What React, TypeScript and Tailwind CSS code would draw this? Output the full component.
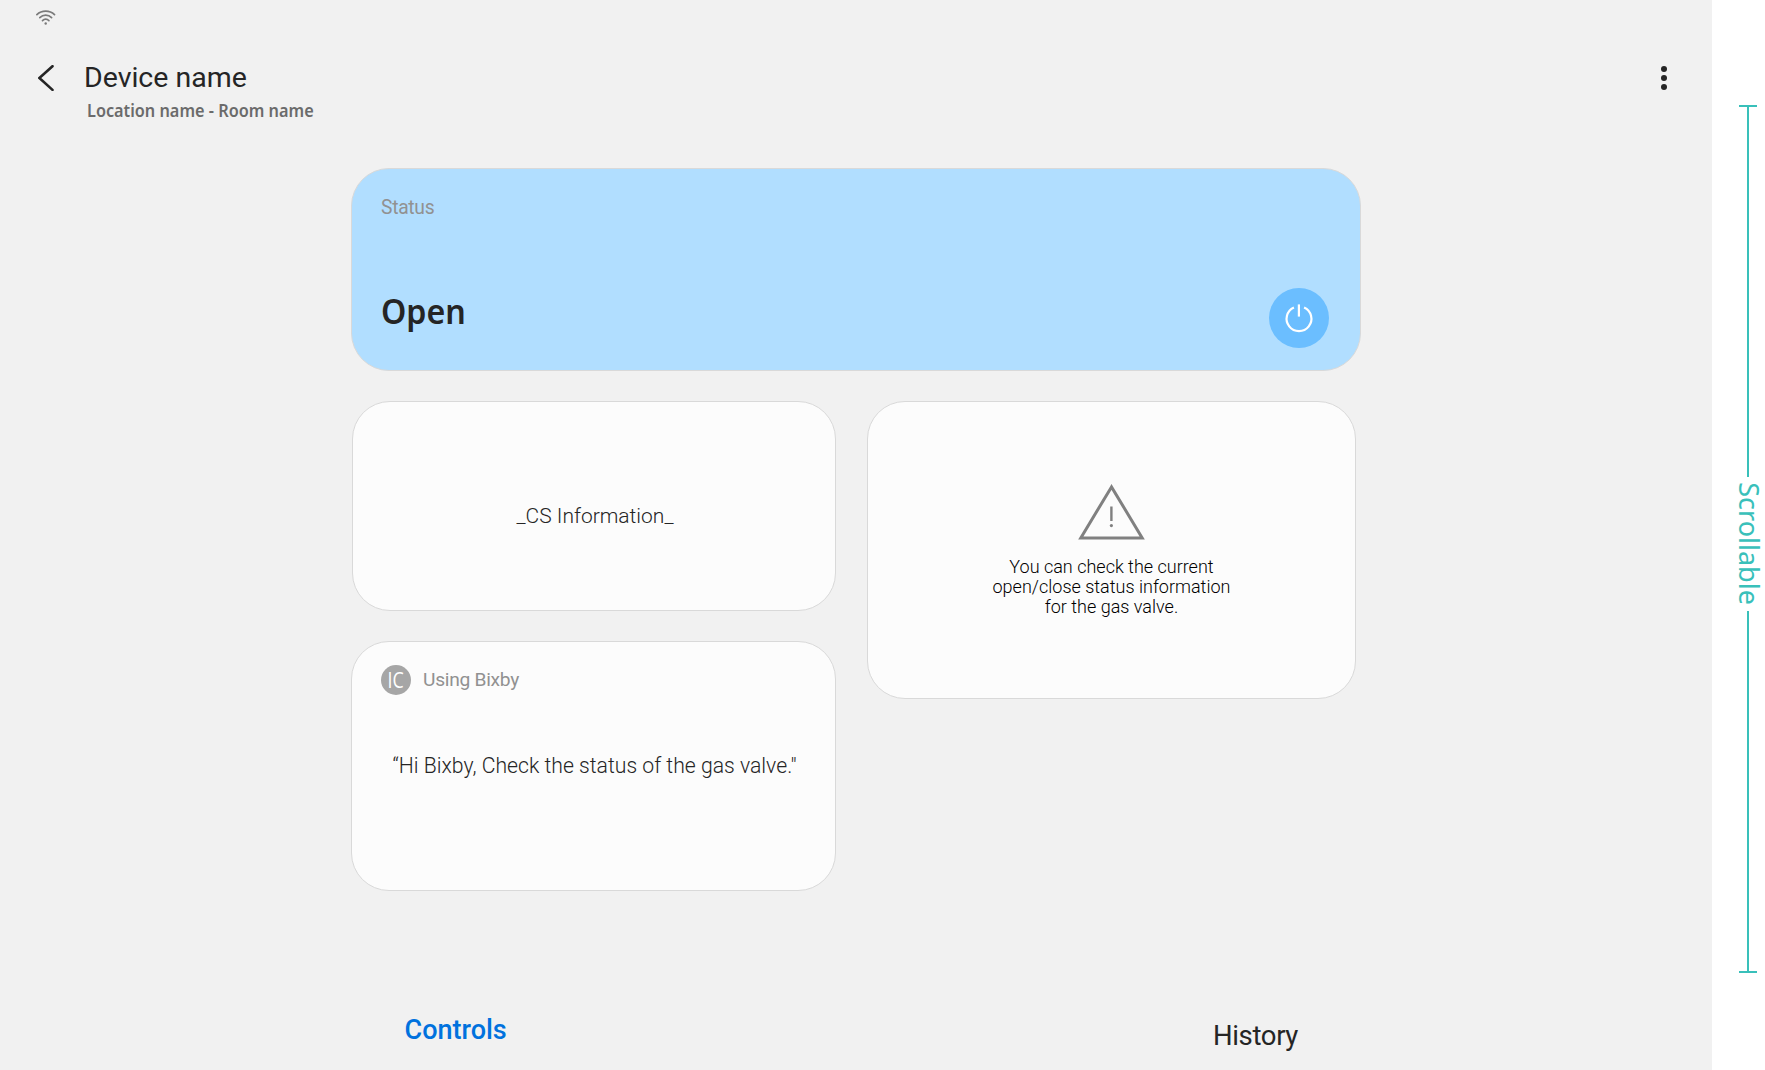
import type { ReactNode } from 'react';

const card = 'rounded-[38px] border border-[#d9d9d9] bg-[#fcfcfc]';

function WifiIcon() {
  return (
    <svg className="block h-[15px] w-5" viewBox="0 0 20 15" fill="none" stroke="#7a7a7a" strokeWidth="1.7" strokeLinecap="round">
      <path d="M0.9 4.6C5.8 -0.1 13.6 -0.1 18.5 4.6" />
      <path d="M3.8 7.7C7.2 4.3 12.2 4.3 15.6 7.7" />
      <path d="M6.5 10.6C8.4 8.7 11 8.7 12.9 10.6" />
      <circle cx="9.7" cy="13.5" r="1.2" fill="#7a7a7a" stroke="none" />
    </svg>
  );
}

function BackIcon() {
  return (
    <svg className="block h-[26px] w-4" viewBox="0 0 16 26" fill="none" stroke="#252525" strokeWidth="2.6">
      <path d="M14.5 1.2L1.4 13L14.5 24.9" strokeLinecap="round" strokeLinejoin="miter" />
    </svg>
  );
}

function PowerIcon() {
  return (
    <svg className="block h-[60px] w-[60px]" viewBox="0 0 60 60" fill="none" stroke="#fff" strokeWidth="2.2">
      <path d="M24.9 19.4A12.4 12.4 0 1 0 35.1 19.4" />
      <path d="M29.9 16.4V28.6" />
    </svg>
  );
}

function WarningIcon() {
  return (
    <svg className="block h-14 w-[67px]" viewBox="0 0 67 56" fill="none" stroke="#808080" strokeWidth="3">
      <path d="M33.5 2.9L2.8 53.9H64.2Z" />
      <path d="M33.4 22.5V37" strokeWidth="2.4" />
      <circle cx="33.4" cy="41.6" r="1.6" fill="#808080" stroke="none" />
    </svg>
  );
}

function Header() {
  return (
    <header className="flex items-start pt-[37px] pr-[45px] pl-[38px]">
      <button className="mt-[3px] mr-[30px]" aria-label="Back">
        <BackIcon />
      </button>
      <div className="grow">
        <h1 className="text-[28.5px] leading-[32px] text-[#252525]">Device name</h1>
        <p className="mt-[6px] ml-[3px] w-max origin-left scale-x-[.93] font-['Noto_Sans',sans-serif] text-[17.5px] leading-[20px] font-semibold text-[#6b6b6b]">
          Location name - Room name
        </p>
      </div>
      <button className="mt-[4px] flex flex-col gap-[2.6px]" aria-label="More options">
        <i className="size-[6.4px] rounded-full bg-[#252525]" />
        <i className="size-[6.4px] rounded-full bg-[#252525]" />
        <i className="size-[6.4px] rounded-full bg-[#252525]" />
      </button>
    </header>
  );
}

function StatusCard() {
  return (
    <section className="flex h-[203px] w-[1010px] justify-between rounded-[38px] border border-[#d9d9d9] bg-[#b1deff] pr-[31px] pl-[29px]">
      <div className="flex flex-col pt-[29px]">
        <span className="text-[19.3px] leading-[20px] tracking-[-0.3px] text-[#919191]">Status</span>
        <strong className="mt-[73px] w-max origin-left scale-x-[.92] font-['Noto_Sans',sans-serif] text-[35px] leading-[40px] font-semibold text-[#252525]">
          Open
        </strong>
      </div>
      <button className="mt-[119px] size-[60px] rounded-full bg-[#6bbeff]" aria-label="Power">
        <PowerIcon />
      </button>
    </section>
  );
}

function Cards() {
  return (
    <div className="mt-[30px] flex items-start gap-[31px]">
      <div className="flex w-[485px] flex-col items-end gap-[30px]">
        <section className={`${card} flex h-[210px] w-[484px] justify-center pt-[102px] pl-[2px]`}>
          <p className="text-[21px] leading-[24px] font-light text-[#252525]">_CS Information_</p>
        </section>
        <section className={`${card} h-[250px] w-[485px]`}>
          <div className="flex items-center gap-[12px] pt-[23px] pl-[29px]">
            <span className="flex size-[30px] items-center justify-center rounded-full bg-[#a6a6a6] font-['Open_Sans',sans-serif] text-[21px] leading-[30px] text-white">
              <span className="scale-x-[.85]">IC</span>
            </span>
            <span className="text-[19.2px] leading-[20px] tracking-[-0.28px] text-[#919191]">Using Bixby</span>
          </div>
          <p className="mt-[59px] pl-[2px] text-center text-[21.2px] leading-[24px] font-light text-[#252525]">
            “Hi Bixby, Check the status of the gas valve."
          </p>
        </section>
      </div>
      <section className={`${card} flex h-[298px] w-[489px] flex-col items-center pt-[82px]`}>
        <WarningIcon />
        <p className="mt-[17px] text-center text-[18px] leading-[20px] font-light text-black">
          You can check the current
          <br />
          open/close status information
          <br />
          for the gas valve.
        </p>
      </section>
    </div>
  );
}

function Tabs() {
  return (
    <nav className="mt-[123px] flex items-start pl-[53.5px]">
      <button className="w-[808.5px] text-left text-[27px] leading-[32px] font-medium text-[#0072de]">Controls</button>
      <button className="mt-[6px] text-[27.5px] leading-[32px] tracking-[-0.35px] text-[#252525]">History</button>
    </nav>
  );
}

function ScrollRail({ children }: { children: ReactNode }) {
  return (
    <aside className="flex h-[1070px] w-[53px] flex-col items-center bg-white pt-[105px] pl-[19px]">
      <div className="h-[2px] w-[18px] bg-[#39c0ba]" />
      <div className="h-[370px] w-[2px] bg-[#39c0ba]" />
      <div className="ml-[4px] flex h-[134px] w-[28px] items-center justify-center [writing-mode:vertical-rl]">
        <span className="origin-center scale-y-[.965] font-['Noto_Sans',sans-serif] text-[28px] leading-[28px] text-[#39c0ba]">{children}</span>
      </div>
      <div className="h-[360px] w-[2px] bg-[#39c0ba]" />
      <div className="h-[2px] w-[18px] bg-[#39c0ba]" />
    </aside>
  );
}

export default function App() {
  return (
    <div className="flex h-[1070px] w-[1765px] overflow-hidden bg-white font-[Roboto,sans-serif]">
      <main className="h-[1070px] w-[1712px] bg-[#f1f1f1]">
        <div className="h-[25px] pt-[10px] pl-[36px]">
          <WifiIcon />
        </div>
        <Header />
        <div className="mt-[48px] pl-[351px]">
          <StatusCard />
          <Cards />
          <Tabs />
        </div>
      </main>
      <ScrollRail>Scrollable</ScrollRail>
    </div>
  );
}
